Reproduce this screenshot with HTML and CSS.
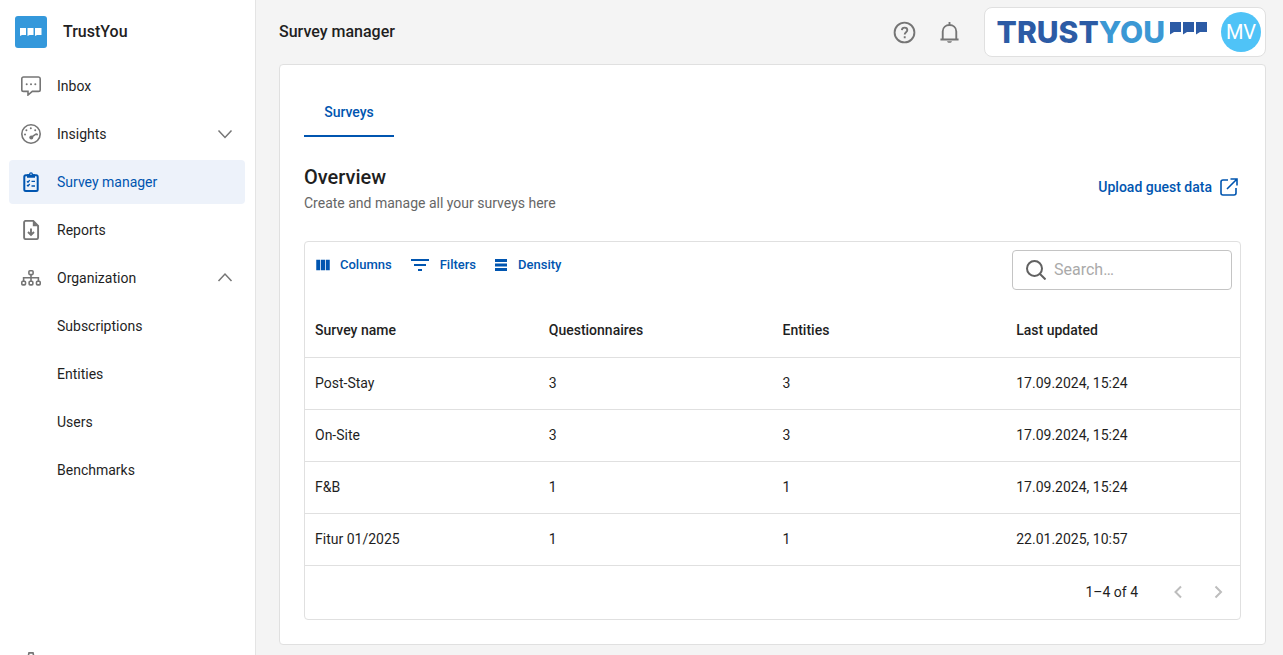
FILE: index.html
```html
<!DOCTYPE html>
<html lang="en">
<head>
    <meta charset="UTF-8">
    <meta name="viewport" content="width=device-width, initial-scale=1.0">
    <title>Survey manager</title>
    <link rel="stylesheet" href="styles.css">
</head>
<body>
    <aside class="sidebar">
        <a class="brand" href="#">
            <svg class="brand-logo" viewBox="0 0 32 32">
                <rect width="32" height="32" rx="3" fill="#3498db"/>
                <path fill="#fff" d="M5 12h6v7H7l-2 1zM12.500 12h6v7h-4l-2 1zM20 12h6.500v7H22l-2 1z"/>
            </svg>
            <span>TrustYou</span>
        </a>
        <nav class="menu">
            <a class="menu-item" href="#">
                <svg class="icon" viewBox="0 0 20 20"><path d="M2.500 1h15A1.700 1.700 0 0 1 19.200 2.700v11a1.700 1.700 0 0 1-1.700 1.700h-6.200L7 19v-3.600H2.500A1.700 1.700 0 0 1 .8 13.700v-11A1.700 1.700 0 0 1 2.500 1z"/><path class="dots" d="M5.700 8.200h.01M10 8.200h.01M14.300 8.200h.01"/></svg>
                <span>Inbox</span>
            </a>
            <a class="menu-item" href="#">
                <svg class="icon" viewBox="0 0 20 20"><circle cx="10" cy="10" r="9.200"/><path class="dots" d="M4 10.500h.01M5.400 6.300h.01M9.800 4.300h.01M14.200 6.300h.01M16 10.500h.01"/><path d="M10.500 13.200l5.200-3.500"/><circle class="solid" cx="10.300" cy="13.400" r="2"/></svg>
                <span>Insights</span>
                <svg class="chevron" viewBox="0 0 16 16"><path d="M1.500 4.500L8 11.500l6.500-7"/></svg>
            </a>
            <a class="menu-item active" href="#">
                <svg class="icon" viewBox="0 0 20 20"><rect x="3.300" y="3.300" width="13.400" height="15.600" rx="1.500"/><path class="solid" d="M6 2.200h2a2 2 0 0 1 4 0h2v3.600H6z"/><path class="thin" d="M6 9.200l1 1 1.700-2M10.500 9.300h3.500M6 13l1 1 1.700-2M10.500 14h3.500"/><circle cx="10" cy="2.300" r=".7" fill="#edf2fa" stroke="none"/></svg>
                <span>Survey manager</span>
            </a>
            <a class="menu-item" href="#">
                <svg class="icon bold" viewBox="0 0 20 20"><path d="M4.700.9h7.500l4.900 4.900v11.700a1.600 1.600 0 0 1-1.600 1.600H4.700a1.600 1.600 0 0 1-1.600-1.600v-15A1.600 1.600 0 0 1 4.700.9z"/><path class="solid" d="M11.800 1v5.200H17z"/><path d="M10 8.500v6.500M7 12l3 3 3-3"/></svg>
                <span>Reports</span>
            </a>
            <a class="menu-item" href="#">
                <svg class="icon" viewBox="0 0 20 20"><rect x="7.900" y="2.700" width="4.200" height="3.900" rx="1"/><rect x=".8" y="13.300" width="3.700" height="3.600" rx="1"/><rect x="8.150" y="13.300" width="3.700" height="3.600" rx="1"/><rect x="15.500" y="13.300" width="3.700" height="3.600" rx="1"/><path d="M10 6.600v6.700M2.600 13.300V9.800h14.800v3.500"/></svg>
                <span>Organization</span>
                <svg class="chevron" viewBox="0 0 16 16"><path d="M1.500 11L8 4l6.500 7"/></svg>
            </a>
            <a class="menu-item sub" href="#">Subscriptions</a>
            <a class="menu-item sub" href="#">Entities</a>
            <a class="menu-item sub" href="#">Users</a>
            <a class="menu-item sub" href="#">Benchmarks</a>
            <a class="menu-item bottom" href="#" aria-label="Settings">
                <svg class="icon" viewBox="0 0 20 20"><path d="M8 .9h4l.6 2.600 2 1.200 2.600-.8 1.900 3.400-1.900 1.800v2l1.900 1.800-1.900 3.400-2.600-.8-2 1.200-.6 2.400H8l-.6-2.400-2-1.200-2.600.8-1.900-3.400 1.900-1.800v-2L.9 7.300l1.900-3.400 2.600.8 2-1.200z"/><circle cx="10" cy="10" r="3"/></svg>
            </a>
        </nav>
    </aside>

    <main class="main">
        <header class="topbar">
            <h1>Survey manager</h1>
            <button class="icon-button" aria-label="Help">
                <svg viewBox="0 0 24 24"><circle cx="12" cy="12" r="9.500"/><path class="mark" d="M9.500 9.700c.1-3.200 5.200-3.200 5.200 0 0 2-2.500 2-2.500 4.100M12.200 15.600v1.800"/></svg>
            </button>
            <button class="icon-button" aria-label="Notifications">
                <svg viewBox="0 0 24 24"><path d="M3.300 18.700h17.400M5.500 18.400V11c0-8.300 13-8.300 13 0v7.400M12 2v2.600"/><path class="solid" d="M9.700 20.300h4.600c-.3 2.200-4.300 2.200-4.600 0z"/></svg>
            </button>
            <button class="account">
                <span class="wordmark">TRUST<b>YOU</b></span>
                <svg class="quotes" viewBox="0 0 37 13"><path d="M0 0h11v10H4l-4 2.500zM13 0h11v10h-7l-4 2.500zM26 0h11v10h-7l-4 2.500z"/></svg>
                <span class="avatar">MV</span>
            </button>
        </header>

        <section class="card">
            <div class="tabs" role="tablist">
                <button class="tab" role="tab" aria-selected="true">Surveys</button>
            </div>
            <div class="overview">
                <div>
                    <h2>Overview</h2>
                    <p>Create and manage all your surveys here</p>
                </div>
                <a class="upload" href="#">
                    Upload guest data
                    <svg viewBox="0 0 18 18"><path d="M8 2H3a2 2 0 0 0-2 2v11a2 2 0 0 0 2 2h11a2 2 0 0 0 2-2v-5M7 11L16.500 1.500M10.500 1H17v6.500"/></svg>
                </a>
            </div>

            <div class="grid">
                <div class="toolbar">
                    <button class="tool">
                        <svg viewBox="0 0 24 24"><path d="M3 5h5.300v14H3zM9.300 5h5.400v14H9.300zM15.700 5H21v14h-5.300z"/></svg>
                        Columns
                    </button>
                    <button class="tool filters">
                        <svg viewBox="0 0 24 24"><path d="M3 6h18v2H3zM6 11h12v2H6zM10 16h4v2h-4z"/></svg>
                        Filters
                    </button>
                    <button class="tool">
                        <svg viewBox="0 0 24 24"><path d="M4 4h16v4H4zM4 10h16v4H4zM4 16h16v4H4z"/></svg>
                        Density
                    </button>
                    <label class="search">
                        <svg viewBox="0 0 20 20"><circle cx="8.500" cy="8.500" r="7.500"/><path d="M14 14l5.500 5.500"/></svg>
                        <input type="search" placeholder="Search…" aria-label="Search">
                    </label>
                </div>
                <table>
                    <thead>
                        <tr><th>Survey name</th><th>Questionnaires</th><th>Entities</th><th>Last updated</th></tr>
                    </thead>
                    <tbody>
                        <tr><td>Post-Stay</td><td>3</td><td>3</td><td>17.09.2024, 15:24</td></tr>
                        <tr><td>On-Site</td><td>3</td><td>3</td><td>17.09.2024, 15:24</td></tr>
                        <tr><td>F&amp;B</td><td>1</td><td>1</td><td>17.09.2024, 15:24</td></tr>
                        <tr><td>Fitur 01/2025</td><td>1</td><td>1</td><td>22.01.2025, 10:57</td></tr>
                    </tbody>
                </table>
                <div class="pagination">
                    <span>1–4 of 4</span>
                    <button class="page-button" aria-label="Previous page" disabled><svg viewBox="0 0 24 24"><path d="M15 6.500L9.500 12l5.500 5.500"/></svg></button>
                    <button class="page-button" aria-label="Next page" disabled><svg viewBox="0 0 24 24"><path d="M9.500 6.500L15 12l-5.500 5.500"/></svg></button>
                </div>
            </div>
        </section>
    </main>
</body>
</html>
```
FILE: styles.css
```css
*{margin: 0; padding: 0; box-sizing: border-box;}
body{
    display: flex;
    height: 100vh;
    font-family: Roboto, Arial, sans-serif;
    font-size: 14px; line-height: 20px;
    color: #1f1f1f; background: #f4f4f4;}
a{color: inherit; text-decoration: none;}
button{border: none; background: none; font: inherit; color: inherit; cursor: pointer;}
svg{display: block; flex: none; fill: none; stroke: currentColor; stroke-width: 2;}

/* Sidebar */
.sidebar{
    flex: none; width: 256px; height: 100vh; overflow: hidden;
    background: #fff; border-right: 1px solid #e4e4e4;}
.brand{
    display: flex; align-items: center; gap: 16px;
    height: 64px; padding-left: 15px;
    font-size: 16px; font-weight: 500;}
.brand-logo{width: 32px; height: 32px; stroke: none;}
.menu{display: flex; flex-direction: column; gap: 4px; padding: 0 10px 0 9px;}
.menu-item{
    display: flex; align-items: center; gap: 16px;
    height: 44px; padding: 0 12px; border-radius: 4px;}
.menu-item.active{background: #edf2fa; color: #0055b0;}
.menu-item.sub{padding-left: 48px;}
.menu-item.bottom{margin-top: 144px;}
.icon{width: 20px; height: 20px; color: #757575; stroke-width: 1.6;}
.icon.bold{stroke-width: 1.9;}
.active .icon{color: #0055b0; stroke-width: 2;}
.icon .dots{stroke-width: 2; stroke-linecap: round;}
.icon .solid{fill: currentColor; stroke: none;}
.icon .thin{stroke-width: 1.3;}
.chevron{width: 16px; height: 16px; margin-left: auto; color: #757575; stroke-width: 1.5;}

/* Top bar */
.main{flex: 1; min-width: 0; padding: 0 17px 10px 23px;}
.topbar{display: flex; align-items: center; height: 64px;}
.topbar h1{flex: 1; font-size: 16px; font-weight: 500;}
.icon-button{padding: 0 10px; color: #757575;}
.icon-button svg{width: 25px; height: 25px; stroke-width: 1.8;}
.icon-button .solid{fill: currentColor; stroke: none;}
.account{
    display: flex; align-items: center;
    height: 50px; margin-left: 12px; padding: 0 4px 0 12px;
    background: #fff; border: 1px solid #e0e0e0; border-radius: 8px;}
.wordmark{font: 800 30px/40px Inter, sans-serif; color: #2c5ba5;}
.wordmark b{font-weight: 800; color: #3b98d4;}
.quotes{width: 37px; height: 13px; margin: 0 14px 8px 5px; fill: #2c5ba5; stroke: none;}
.avatar{
    width: 40px; height: 40px; border-radius: 50%;
    background: #4fc3f7; color: #fff;
    font-size: 20px; line-height: 40px; text-align: center;}

/* Card */
.card{padding: 24px; background: #fff; border: 1px solid #e0e0e0; border-radius: 4px;}
.tabs{display: flex;}
.tab{
    width: 90px; height: 48px;
    border-bottom: 2px solid #0055b0;
    color: #0055b0; font-weight: 500;}
.overview{
    display: flex; align-items: flex-start; justify-content: space-between;
    padding: 26px 3px 26px 0;}
.overview h2{font-size: 20px; line-height: 28px; font-weight: 500;}
.overview p{line-height: 24px; color: #666;}
.upload{display: flex; align-items: center; gap: 8px; height: 48px; color: #0055b0; font-weight: 500;}
.upload svg{width: 18px; height: 18px; stroke-width: 1.6;}

/* Survey table */
.grid{border: 1px solid #e0e0e0; border-radius: 4px;}
.toolbar{display: flex; height: 61px; padding: 8px 8px 0 9px; gap: 16px;}
.tool{
    display: flex; align-items: center; gap: 8px; height: 30px;
    color: #0055b0; font-size: 13px; font-weight: 500;}
.tool svg{width: 18px; height: 18px; fill: currentColor; stroke: none;}
.tool.filters svg{width: 24px; height: 24px;}
.search{
    display: flex; align-items: center; gap: 8px;
    width: 220px; height: 40px; margin-left: auto; padding: 0 13px;
    border: 1px solid #c4c4c4; border-radius: 4px;}
.search svg{width: 20px; height: 20px; color: #616161;}
.search input{min-width: 0; flex: 1; border: none; outline: none; background: none; font: inherit; font-size: 16px;}
.search input::placeholder{color: #aaa;}
table{width: 100%; table-layout: fixed; border-collapse: collapse;}
th, td{height: 52px; padding: 0 10px; text-align: left; border-bottom: 1px solid #e0e0e0;}
th{height: 54px; font-weight: 500;}
.pagination{display: flex; align-items: center; justify-content: flex-end; height: 53px; padding-right: 2px;}
.pagination span{margin-right: 20px;}
.page-button{padding: 8px; color: #bdbdbd;}
.page-button svg{width: 24px; height: 24px;}
```
